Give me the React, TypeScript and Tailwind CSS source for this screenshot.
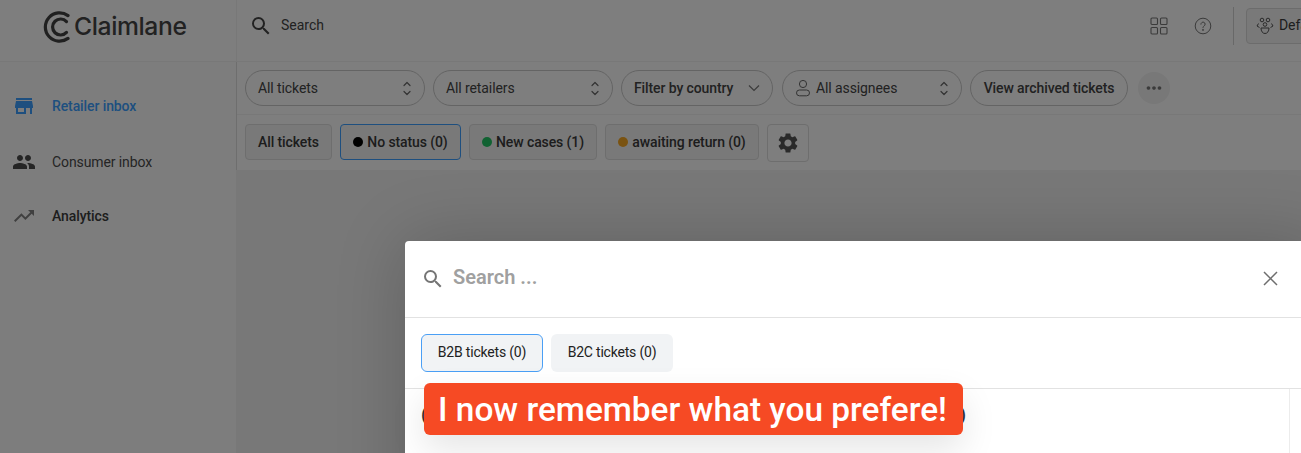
import { MdStore, MdPeople, MdTrendingUp, MdSettings, MdSearch, MdMoreHoriz } from "react-icons/md";
import type { ReactNode } from "react";

const Updown = () => (
  <svg width="10" height="15" viewBox="0 0 10 15" fill="none" stroke="#666" strokeWidth="1.2" strokeLinecap="round" strokeLinejoin="round">
    <path d="M2 4.5 5 1.5 8 4.5" />
    <path d="M2 10.5 5 13.5 8 10.5" />
  </svg>
);

const Pill = ({ width, children, className = "" }: { width: string; children: ReactNode; className?: string }) => (
  <div className={`flex h-[36px] items-center whitespace-nowrap rounded-full border border-[#c8c8c8] px-[12px] text-[14px] text-[#444] ${width} ${className}`}>
    {children}
  </div>
);

const Chip = ({ dot, label, className }: { dot?: string; label: string; className: string }) => (
  <div className={`flex h-[36px] items-center justify-center gap-[4px] whitespace-nowrap rounded-[4px] border text-[14px] font-medium text-[#3a3a3a] ${className}`}>
    {dot && <span className={`h-[10px] w-[10px] rounded-full ${dot}`} />}
    {label}
  </div>
);

const Side = ({ icon, label, active, bold, className = "" }: { icon: ReactNode; label: string; active?: boolean; bold?: boolean; className?: string }) => (
  <div className={`flex items-center pl-[12px] ${className}`}>
    <div className="flex w-[40px] items-center">{icon}</div>
    <span className={`text-[14px] ${active ? "font-medium text-[#3c9fff]" : bold ? "font-medium text-[#3c3c3c]" : "text-[#4a4a4a]"}`}>{label}</span>
  </div>
);

export default function App() {
  return (
    <div className="relative h-[453px] w-full overflow-hidden bg-[#f0f0f0] font-['Roboto',sans-serif] tracking-[-0.1px]">
      <header className="flex h-[62px] border-b border-[#f0f0f0] bg-[#fcfcfc]">
        <div className="flex w-[237px] shrink-0 items-center border-r border-[#f0f0f0] pb-[8px] pl-[42px]">
          <svg width="28" height="32" viewBox="0 0 28 32" fill="none" stroke="#404040" strokeLinecap="round" className="shrink-0">
            <path d="M26 4.6A14.2 14.2 0 1 0 26 27.4" strokeWidth="3.2" />
            <path d="M24.5 10.6A8 8 0 1 0 24.5 21.4" strokeWidth="3.2" />
          </svg>
          <span className="ml-[4px] font-['Inter',sans-serif] text-[24.7px] leading-none font-medium tracking-[-0.4px] text-[#444]">Claimlane</span>
        </div>
        <div className="flex flex-1 items-center pb-[10px] pl-[12px]">
          <MdSearch size={24} className="text-[#444]" />
          <span className="ml-[8px] text-[14px] tracking-normal text-[#444]">Search</span>
          <div className="ml-auto flex items-center">
            <svg width="18" height="18" viewBox="0 0 18 18" fill="none" stroke="#777" strokeWidth="1.1" className="mr-[26px] ml-[1px] mt-[1px]">
              <rect x="1" y="1" width="6.5" height="6.5" rx="1" />
              <rect x="10.5" y="1" width="6.5" height="6.5" rx="1" />
              <rect x="1" y="10.5" width="6.5" height="6.5" rx="1" />
              <rect x="10.5" y="10.5" width="6.5" height="6.5" rx="1" />
            </svg>
            <svg width="18" height="18" viewBox="0 0 18 18" fill="none" stroke="#777" strokeWidth="1" className="mr-[21px] mt-[1px]">
              <circle cx="9" cy="9" r="7.8" />
              <path d="M6.9 7.2a2.1 2.1 0 1 1 3.3 1.7c-.8.5-1.2.9-1.2 1.8" strokeLinecap="round" />
              <circle cx="9" cy="12.9" r=".5" fill="#777" />
            </svg>
            <div className="mr-[12px] h-[38px] w-px bg-[#d0d0d0]" />
            <div className="-mr-[35px] flex h-[36px] w-[90px] items-center whitespace-nowrap rounded-[4px] border border-[#d8d8d8] bg-[#f2f2f2] pl-[9px]">
              <svg width="18" height="18" viewBox="0 0 18 18" fill="none" stroke="#555" strokeWidth="1" className="shrink-0">
                <circle cx="6" cy="3" r="1.8" />
                <circle cx="12" cy="3" r="1.8" />
                <circle cx="9" cy="7.5" r="1.8" />
                <path d="M2.5 6.5 1 9l2.5 1.5M15.5 6.5 17 9l-2.5 1.5M5 11h8c0 3-1.5 5.5-4 5.5S5 14 5 11Z" />
              </svg>
              <span className="ml-[5px] text-[14px] text-[#3c3c3c]">Default</span>
            </div>
          </div>
        </div>
      </header>

      <div className="flex">
        <nav className="h-[391px] w-[236px] shrink-0 bg-[#fbfbfb] pt-[33px]">
          <Side active label="Retailer inbox" className="h-[22px]" icon={<MdStore size={24} className="text-[#3c9fff]" />} />
          <Side label="Consumer inbox" className="mt-[34px] h-[22px]" icon={<MdPeople size={24} className="text-[#4a4a4a]" />} />
          <Side bold label="Analytics" className="mt-[32px] h-[22px]" icon={<MdTrendingUp size={24} className="text-[#808080]" />} />
        </nav>
        <main className="flex-1">
          <div className="border-l border-[#dcdcdc] bg-[#fcfcfc]">
            <div className="flex h-[53px] items-center gap-[8px] border-b border-[#f0f0f0] pl-[8px]">
              <Pill width="w-[180px]" className="justify-between"><span>All tickets</span><Updown /></Pill>
              <Pill width="w-[180px]" className="justify-between"><span>All retailers</span><Updown /></Pill>
              <Pill width="w-[152px]" className="justify-between font-medium"><span>Filter by country</span>
                <svg width="12" height="8" viewBox="0 0 12 8" fill="none" stroke="#777" strokeWidth="1.2"><path d="m1 1.5 5 5 5-5" /></svg>
              </Pill>
              <Pill width="w-[180px]" className="ml-[1px]">
                <svg width="16" height="18" viewBox="0 0 16 18" fill="none" stroke="#666" strokeWidth="1"><circle cx="8" cy="5" r="3.6" /><rect x="1.5" y="11" width="13" height="5.8" rx="2.9" /></svg>
                <span className="ml-[5px]">All assignees</span>
                <span className="ml-auto"><Updown /></span>
              </Pill>
              <Pill width="w-[158px]" className="justify-center px-0 font-medium">View archived tickets</Pill>
              <div className="ml-[2px] flex h-[32px] w-[32px] items-center justify-center rounded-full bg-[#f0f0f0]">
                <MdMoreHoriz size={22} className="text-[#777]" />
              </div>
            </div>
            <div className="flex h-[55px] items-start gap-[8px] pl-[8px] pt-[9px]">
              <Chip label="All tickets" className="w-[87px] border-[#dcdcdc] bg-[#f3f3f3]" />
              <Chip dot="bg-black" label="No status (0)" className="w-[121px] border-[#3c9fff] bg-[#f3f3f3]" />
              <Chip dot="bg-[#22c564]" label="New cases (1)" className="w-[128px] border-[#dcdcdc] bg-[#f3f3f3]" />
              <Chip dot="bg-[#f5a623]" label="awaiting return (0)" className="w-[154px] border-[#dcdcdc] bg-[#f3f3f3]" />
              <div className="flex h-[38px] w-[42px] items-center justify-center rounded-[4px] border border-[#dcdcdc]">
                <MdSettings size={24} className="text-[#555]" />
              </div>
            </div>
          </div>
        </main>
      </div>

      <div className="absolute inset-0 bg-black/50" />

      <div className="absolute top-[241px] left-[405px] h-[300px] w-[920px] rounded-t-[4px] bg-white shadow-[0_0_70px_rgba(0,0,0,0.2)]">
        <div className="flex h-[77px] items-center border-b border-[#e2e2e2] pl-[16px]">
          <MdSearch size={24} className="text-[#757575]" />
          <span className="mb-[4px] ml-[8px] text-[20px] font-semibold tracking-normal text-[#a0a0a0]">Search ...</span>
          <svg width="15" height="15" viewBox="0 0 15 15" fill="none" stroke="#6e6e6e" strokeWidth="1.5" className="absolute top-[30px] left-[858px]">
            <path d="m1 1 13 13M14 1 1 14" />
          </svg>
        </div>
        <div className="flex h-[71px] items-start gap-[8px] border-b border-[#e2e2e2] pl-[16px] pt-[16px]">
          <div className="flex h-[38px] w-[122px] items-center justify-center rounded-[6px] border border-[#4a9ff5] bg-[#f1f3f5] pb-[1px] text-[14px] tracking-[-0.2px] text-[#222]">B2B tickets (0)</div>
          <div className="flex h-[38px] w-[122px] items-center justify-center rounded-[6px] bg-[#f1f3f5] pb-[1px] text-[14px] tracking-[-0.2px] text-[#222]">B2C tickets (0)</div>
        </div>
        <div className="h-full w-[885px] border-r border-[#ececec]">
          <div className="flex w-[561px] justify-between pl-[16px] pt-[15px] text-[18px] font-medium leading-[22px] text-[#333]">
            <span>(</span>
            <span>)</span>
          </div>
        </div>
      </div>

      <div className="absolute top-[383px] left-[424px] flex h-[52px] w-[539px] items-center justify-center whitespace-nowrap rounded-[6px] bg-[#f64a24] pt-[2px] pr-[2px] text-[33.4px] font-medium tracking-normal text-white shadow-[0_15px_35px_rgba(0,0,0,0.1)]">
        I now remember what you prefere!
      </div>
    </div>
  );
}
